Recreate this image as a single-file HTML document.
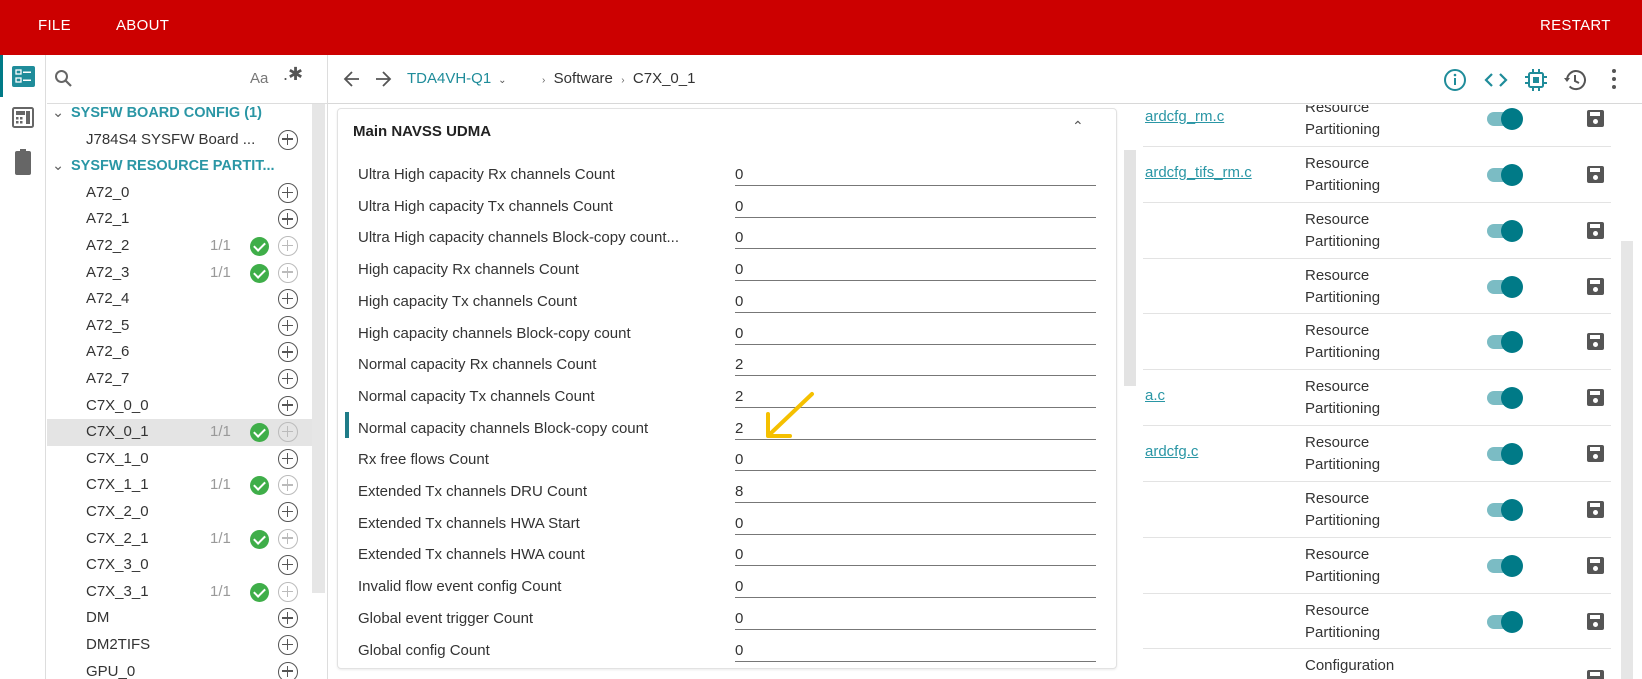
<!DOCTYPE html>
<html><head><meta charset="utf-8"><style>
*{margin:0;padding:0;box-sizing:border-box}
html,body{width:1642px;height:679px;overflow:hidden}
body{background:#fff;font-family:"Liberation Sans",sans-serif;color:#333;position:relative}
.a{position:absolute}
.top{left:0;top:0;width:1642px;height:55px;background:#cc0000;color:#fff;font-size:15px}
.top span{position:absolute;top:17px;letter-spacing:.3px}
.rail{left:0;top:55px;width:46px;height:624px;background:#fff;border-right:1px solid #ddd}
.side{left:47px;top:55px;width:280px;height:624px;background:#fff;overflow:hidden}
.srow{position:absolute;left:0;width:265px;height:26.6px;font-size:15px;line-height:26.6px;color:#333}
.srow .t{position:absolute;left:39px}
.hd{color:#2a96a5;font-weight:bold;font-size:14.5px}
.hd .t{left:24px}
.plus{position:absolute;left:231px;top:3px;width:20px;height:20px;border:1.4px solid #555;border-radius:50%}
.plus:before{content:"";position:absolute;left:3px;top:7.8px;width:11.2px;height:1.4px;background:#555}
.plus:after{content:"";position:absolute;left:7.8px;top:3px;width:1.4px;height:11.2px;background:#555}
.plus.l{border-color:#bbb}.plus.l:before,.plus.l:after{background:#bbb}
.ok{position:absolute;left:203px;top:4px;width:19px;height:19px;border-radius:50%;background:#3fae49}
.ok:after{content:"";position:absolute;left:6px;top:3px;width:5px;height:9px;border:solid #fff;border-width:0 2.4px 2.4px 0;transform:rotate(45deg)}
.cnt{position:absolute;left:163px;color:#999}
.frow{position:absolute;left:358px;height:31px;font-size:15px;width:740px}
.frow .l{position:absolute;left:0;top:2px}
.frow .v{position:absolute;left:377px;top:2px;width:361px;height:20px;border-bottom:1.3px solid #777}
.rrow{position:absolute;left:1143px;width:468px;height:56px;border-top:1px solid #e3e3e3;font-size:15px}
.rrow .r{position:absolute;left:162px;top:6px;line-height:22px}
.rrow .lk{position:absolute;left:2px;top:17px;color:#2a96a5;text-decoration:underline}
.tg{position:absolute;left:344px;top:21px;width:34px;height:14px;border-radius:7px;background:#7bbcc4}
.tg:after{content:"";position:absolute;left:14px;top:-4px;width:22px;height:22px;border-radius:50%;background:#007a87}
.sv{position:absolute;left:444px;top:19px;width:17px;height:17px;background:#555;border-radius:2px}
.sv:before{content:"";position:absolute;left:3px;top:2px;width:10px;height:4px;background:#fff}
.sv:after{content:"";position:absolute;left:6px;top:9px;width:5px;height:5px;border-radius:50%;background:#fff}
</style></head><body>
<div class="a top"><span style="left:38px">FILE</span><span style="left:116px">ABOUT</span><span style="left:1540px">RESTART</span></div>

<div class="a rail">
 <div class="a" style="left:0;top:0;width:3px;height:42px;background:#007a87"></div>
 <svg class="a" style="left:12px;top:11px" width="23" height="21" viewBox="0 0 23 21"><rect width="23" height="21" rx="2" fill="#1f8c9a"/><rect x="4" y="4" width="5" height="4" fill="none" stroke="#fff" stroke-width="1.3"/><rect x="4" y="12" width="5" height="4" fill="none" stroke="#fff" stroke-width="1.3"/><rect x="11" y="5.5" width="8" height="1.5" fill="#fff"/><rect x="11" y="13.5" width="8" height="1.5" fill="#fff"/></svg>
 <svg class="a" style="left:12px;top:52px" width="22" height="21" viewBox="0 0 22 21"><rect x="1" y="1" width="20" height="19" rx="1.5" fill="none" stroke="#666" stroke-width="2"/><rect x="4" y="4" width="9" height="4" fill="#666"/><g fill="#666"><rect x="4" y="10" width="2.5" height="2.5"/><rect x="8" y="10" width="2.5" height="2.5"/><rect x="4" y="14" width="2.5" height="2.5"/><rect x="8" y="14" width="2.5" height="2.5"/><rect x="14" y="4" width="4" height="13"/></g></svg>
 <svg class="a" style="left:15px;top:94px" width="16" height="26" viewBox="0 0 16 26"><rect x="5" y="0" width="6" height="3" fill="#666"/><rect x="0" y="2" width="16" height="24" rx="2" fill="#666"/></svg>
</div>

<div class="a side">
 <div class="a" style="left:0;top:0;width:280px;height:49px;border-bottom:1px solid #ddd"></div>
 <svg class="a" style="left:7px;top:14px" width="20" height="20" viewBox="0 0 20 20"><circle cx="7.5" cy="7.5" r="5.5" fill="none" stroke="#666" stroke-width="2"/><path d="M11.5 11.5L17 17" stroke="#666" stroke-width="2.2"/></svg>
 <div class="a" style="left:203px;top:15px;font-size:15px;color:#777">Aa</div>
 <div class="a" style="left:236px;top:9px;font-size:18px;color:#555">.✱</div>
 <div class="a" style="left:265px;top:49px;width:13px;height:489px;background:#e6e6e6"></div>
 <div class="a" style="left:0;top:49px;width:265px;height:575px;overflow:hidden">
  <div class="srow hd" style="top:-4px"><span class="a" style="left:5px;color:#666;font-weight:normal">⌄</span><span class="t">SYSFW BOARD CONFIG (1)</span></div>
  <div class="srow" style="top:22.6px"><span class="t">J784S4 SYSFW Board ...</span><div class="plus"></div></div>
  <div class="srow hd" style="top:49.2px"><span class="a" style="left:5px;color:#666;font-weight:normal">⌄</span><span class="t">SYSFW RESOURCE PARTIT...</span></div>
  <div class="srow" style="top:75.8px"><span class="t">A72_0</span><div class="plus"></div></div>
  <div class="srow" style="top:102.4px"><span class="t">A72_1</span><div class="plus"></div></div>
  <div class="srow" style="top:129px"><span class="t">A72_2</span><span class="cnt">1/1</span><div class="ok"></div><div class="plus l"></div></div>
  <div class="srow" style="top:155.6px"><span class="t">A72_3</span><span class="cnt">1/1</span><div class="ok"></div><div class="plus l"></div></div>
  <div class="srow" style="top:182.2px"><span class="t">A72_4</span><div class="plus"></div></div>
  <div class="srow" style="top:208.8px"><span class="t">A72_5</span><div class="plus"></div></div>
  <div class="srow" style="top:235.4px"><span class="t">A72_6</span><div class="plus"></div></div>
  <div class="srow" style="top:262px"><span class="t">A72_7</span><div class="plus"></div></div>
  <div class="srow" style="top:288.6px"><span class="t">C7X_0_0</span><div class="plus"></div></div>
  <div class="srow" style="top:315.2px;background:#e4e4e4"><span class="t">C7X_0_1</span><span class="cnt">1/1</span><div class="ok"></div><div class="plus l"></div></div>
  <div class="srow" style="top:341.8px"><span class="t">C7X_1_0</span><div class="plus"></div></div>
  <div class="srow" style="top:368.4px"><span class="t">C7X_1_1</span><span class="cnt">1/1</span><div class="ok"></div><div class="plus l"></div></div>
  <div class="srow" style="top:395px"><span class="t">C7X_2_0</span><div class="plus"></div></div>
  <div class="srow" style="top:421.6px"><span class="t">C7X_2_1</span><span class="cnt">1/1</span><div class="ok"></div><div class="plus l"></div></div>
  <div class="srow" style="top:448.2px"><span class="t">C7X_3_0</span><div class="plus"></div></div>
  <div class="srow" style="top:474.8px"><span class="t">C7X_3_1</span><span class="cnt">1/1</span><div class="ok"></div><div class="plus l"></div></div>
  <div class="srow" style="top:501.4px"><span class="t">DM</span><div class="plus"></div></div>
  <div class="srow" style="top:528px"><span class="t">DM2TIFS</span><div class="plus"></div></div>
  <div class="srow" style="top:554.6px"><span class="t">GPU_0</span><div class="plus"></div></div>
 </div>
</div>
<div class="a" style="left:327px;top:55px;width:1px;height:624px;background:#ddd"></div>

<!-- toolbar -->
<div class="a" style="left:328px;top:55px;width:1314px;height:49px;border-bottom:1px solid #d8d8d8"></div>
<svg class="a" style="left:343px;top:70px" width="18" height="18" viewBox="0 0 18 18"><path d="M16 9H3M9 2L2 9l7 7" fill="none" stroke="#555" stroke-width="1.8"/></svg>
<svg class="a" style="left:374px;top:70px" width="18" height="18" viewBox="0 0 18 18"><path d="M2 9h13M9 2l7 7-7 7" fill="none" stroke="#555" stroke-width="1.8"/></svg>
<div class="a" style="left:407px;top:70px;font-size:15px;color:#1f8c9a">TDA4VH-Q1 <span style="color:#555;font-size:10px">&nbsp;⌄</span></div>
<div class="a" style="left:542px;top:70px;font-size:15px;color:#333"><span style="font-size:10px;color:#666">›</span>&nbsp; Software &nbsp;<span style="font-size:10px;color:#666">›</span>&nbsp; C7X_0_1</div>
<svg class="a" style="left:1443px;top:68px" width="24" height="24" viewBox="0 0 24 24"><circle cx="12" cy="12" r="10" fill="none" stroke="#1f8c9a" stroke-width="2"/><rect x="11" y="10" width="2" height="7" fill="#1f8c9a"/><circle cx="12" cy="7" r="1.3" fill="#1f8c9a"/></svg>
<svg class="a" style="left:1484px;top:70px" width="24" height="20" viewBox="0 0 24 20"><path d="M8 4L2 10l6 6M16 4l6 6-6 6" fill="none" stroke="#1f8c9a" stroke-width="2.2"/></svg>
<svg class="a" style="left:1524px;top:68px" width="24" height="24" viewBox="0 0 24 24"><rect x="5" y="5" width="14" height="14" rx="1.5" fill="none" stroke="#1f8c9a" stroke-width="2"/><rect x="9" y="9" width="6" height="6" fill="#1f8c9a"/><path d="M9 1v4M15 1v4M9 19v4M15 19v4M1 9h4M1 15h4M19 9h4M19 15h4" stroke="#1f8c9a" stroke-width="2"/></svg>
<svg class="a" style="left:1563px;top:68px" width="24" height="24" viewBox="0 0 24 24"><path d="M4 12a9 9 0 1 1 2.6 6.4" fill="none" stroke="#555" stroke-width="2"/><path d="M1 10l3 4 3-4z" fill="#555"/><path d="M12 7v6l4 2" fill="none" stroke="#555" stroke-width="2"/></svg>
<div class="a" style="left:1612px;top:69px;width:4px;height:22px"><div class="a" style="left:0;top:0;width:4px;height:4px;border-radius:50%;background:#555"></div><div class="a" style="left:0;top:8px;width:4px;height:4px;border-radius:50%;background:#555"></div><div class="a" style="left:0;top:16px;width:4px;height:4px;border-radius:50%;background:#555"></div></div>

<!-- right table -->
<div class="a" style="left:1136px;top:105px;width:480px;height:574px;overflow:hidden">
 <div style="position:absolute;left:-1136px;top:-105px;width:1642px;height:784px">
  <div class="rrow" style="top:90px"><span class="lk" style="top:17px">ardcfg_rm.c</span><div class="r">Resource<br>Partitioning</div><div class="tg"></div><div class="sv"></div></div>
  <div class="rrow" style="top:146px"><span class="lk">ardcfg_tifs_rm.c</span><div class="r">Resource<br>Partitioning</div><div class="tg"></div><div class="sv"></div></div>
  <div class="rrow" style="top:202px"><div class="r">Resource<br>Partitioning</div><div class="tg"></div><div class="sv"></div></div>
  <div class="rrow" style="top:258px"><div class="r">Resource<br>Partitioning</div><div class="tg"></div><div class="sv"></div></div>
  <div class="rrow" style="top:313px"><div class="r">Resource<br>Partitioning</div><div class="tg"></div><div class="sv"></div></div>
  <div class="rrow" style="top:369px"><span class="lk">a.c</span><div class="r">Resource<br>Partitioning</div><div class="tg"></div><div class="sv"></div></div>
  <div class="rrow" style="top:425px"><span class="lk">ardcfg.c</span><div class="r">Resource<br>Partitioning</div><div class="tg"></div><div class="sv"></div></div>
  <div class="rrow" style="top:481px"><div class="r">Resource<br>Partitioning</div><div class="tg"></div><div class="sv"></div></div>
  <div class="rrow" style="top:537px"><div class="r">Resource<br>Partitioning</div><div class="tg"></div><div class="sv"></div></div>
  <div class="rrow" style="top:593px"><div class="r">Resource<br>Partitioning</div><div class="tg"></div><div class="sv"></div></div>
  <div class="rrow" style="top:648px"><div class="r">Configuration</div><div class="sv" style="top:21px"></div></div>
 </div>
</div>
<div class="a" style="left:1621px;top:241px;width:12px;height:438px;background:#e6e6e6"></div>

<!-- form card -->
<div class="a" style="left:1124px;top:150px;width:12px;height:236px;background:#e3e3e3"></div>
<div class="a" style="left:337px;top:108px;width:780px;height:561px;background:#fff;border:1px solid #e2e2e2;border-radius:4px;box-shadow:0 1px 2px rgba(0,0,0,.08)"></div>
<div class="a" style="left:353px;top:123px;font-size:15px;font-weight:bold;color:#222">Main NAVSS UDMA</div>
<div class="a" style="left:1072px;top:118px;font-size:14px;color:#555">⌃</div>
<div class="a" style="left:345px;top:412px;width:4px;height:26px;background:#1f7c88"></div>
<div class="frow" style="top:164px"><span class="l">Ultra High capacity Rx channels Count</span><div class="v">0</div></div>
<div class="frow" style="top:195.7px"><span class="l">Ultra High capacity Tx channels Count</span><div class="v">0</div></div>
<div class="frow" style="top:227.4px"><span class="l">Ultra High capacity channels Block-copy count...</span><div class="v">0</div></div>
<div class="frow" style="top:259.1px"><span class="l">High capacity Rx channels Count</span><div class="v">0</div></div>
<div class="frow" style="top:290.8px"><span class="l">High capacity Tx channels Count</span><div class="v">0</div></div>
<div class="frow" style="top:322.5px"><span class="l">High capacity channels Block-copy count</span><div class="v">0</div></div>
<div class="frow" style="top:354.2px"><span class="l">Normal capacity Rx channels Count</span><div class="v">2</div></div>
<div class="frow" style="top:385.9px"><span class="l">Normal capacity Tx channels Count</span><div class="v">2</div></div>
<div class="frow" style="top:417.6px"><span class="l">Normal capacity channels Block-copy count</span><div class="v">2</div></div>
<div class="frow" style="top:449.3px"><span class="l">Rx free flows Count</span><div class="v">0</div></div>
<div class="frow" style="top:481px"><span class="l">Extended Tx channels DRU Count</span><div class="v">8</div></div>
<div class="frow" style="top:512.7px"><span class="l">Extended Tx channels HWA Start</span><div class="v">0</div></div>
<div class="frow" style="top:544.4px"><span class="l">Extended Tx channels HWA count</span><div class="v">0</div></div>
<div class="frow" style="top:576.1px"><span class="l">Invalid flow event config Count</span><div class="v">0</div></div>
<div class="frow" style="top:607.8px"><span class="l">Global event trigger Count</span><div class="v">0</div></div>
<div class="frow" style="top:639.5px"><span class="l">Global config Count</span><div class="v">0</div></div>

<!-- annotation arrow -->
<svg class="a" style="left:760px;top:390px" width="60" height="55" viewBox="0 0 60 55"><path d="M52 4L10 44M8 24L8 46L30 46" fill="none" stroke="#f5c000" stroke-width="4" stroke-linecap="round" stroke-linejoin="round"/></svg>
</body></html>
